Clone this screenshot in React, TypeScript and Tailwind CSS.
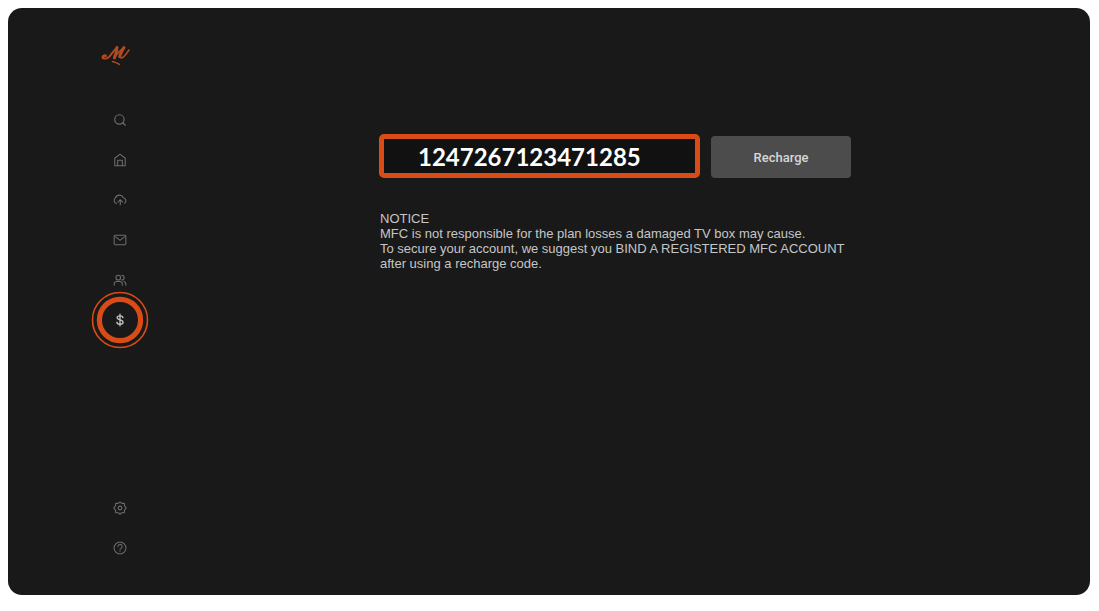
import React, { useState } from 'react';
import { Search } from 'lucide-react';

type NavItem = {
  label: string;
  icon: React.ReactNode;
  active?: boolean;
};

const LineIcon: React.FC<{ children: React.ReactNode }> = ({ children }) => (
  <svg
    width="14"
    height="14"
    viewBox="0 0 24 24"
    fill="none"
    stroke="currentColor"
    strokeWidth="1.8"
    strokeLinecap="round"
    strokeLinejoin="round"
  >
    {children}
  </svg>
);

const Logo: React.FC = () => (
  <svg width="32" height="22" viewBox="0 0 32 22" fill="none" stroke="#b24a20" strokeLinecap="round" strokeLinejoin="round">
    <path strokeWidth="2.6" d="M5.6 10.8C4 10.2 2.600 11.400 2.900 12.600" />
    <path strokeWidth="1.8" d="M2.900 12.600c.6 1.500 3.400 1.200 5.400-.2C11.200 10.400 13 6 17 2.300" />
    <path strokeWidth="3" d="M17 2.500C16.800 6 15.800 9.500 14.400 12.800" />
    <path strokeWidth="1.6" d="M14.400 12.800C17 8.800 20 5 24.200 2.300" />
    <path strokeWidth="3" d="M24 2.600C22.300 5.500 20 9 19.800 11.600" />
    <path strokeWidth="1.5" d="M19.800 11.600c.2 2 2.400 1.500 4.200-.2C26 9.300 27.300 7.500 29 5" />
    <path strokeWidth="1.5" d="M12.500 16.500c2.500.4 4.500 1.600 7 3" />
  </svg>
);

const mainItems: NavItem[] = [
  { label: 'Search', icon: <Search size={14} strokeWidth={2} /> },
  {
    label: 'Home',
    icon: (
      <LineIcon>
        <path d="M3 9 12 2l9 7v13H3z" />
        <path d="M8 22V12.500h8V22" />
      </LineIcon>
    ),
  },
  {
    label: 'Upload',
    icon: (
      <LineIcon>
        <path d="M6 18a5.500 5.500 0 0 1-2-9.500A7.500 7.500 0 0 1 17.800 8 5.300 5.300 0 0 1 20 17.500" />
        <path d="M12.500 20v-8M8.500 15.500l4-4 4 4" />
      </LineIcon>
    ),
  },
  {
    label: 'Messages',
    icon: (
      <LineIcon>
        <rect x="2" y="4" width="20" height="16" rx="1.5" />
        <path d="m4.500 6.500 7.500 6 7.500-6" />
      </LineIcon>
    ),
  },
  {
    label: 'Friends',
    icon: (
      <LineIcon>
        <circle cx="9" cy="8" r="4" />
        <path d="M2 21v-2a4.500 4.500 0 0 1 4.500-4.500h5A4.500 4.500 0 0 1 16 19v2M15 4a4 4 0 0 1 0 8M18.500 14.500A4.500 4.500 0 0 1 22 19v2" />
      </LineIcon>
    ),
  },
  {
    label: 'Recharge plan',
    icon: (
      <LineIcon>
        <path strokeWidth="2.2" d="M12 2v20M17 8c0-2-2-3.200-5-3.200S7 6.300 7 8.300c0 4.700 10.300 2.500 10.300 7.400 0 2.200-2.300 3.500-5.300 3.500s-5.300-1.300-5.300-3.500" />
      </LineIcon>
    ),
    active: true,
  },
];

const footerItems: NavItem[] = [
  {
    label: 'Settings',
    icon: (
      <LineIcon>
        <path d="m12 1.500 3 2.600 4.300-.4.400 4.200 3 4.100-3 3.600-.4 4.700-4.300-.2-3 2.600-3-2.600-4.300.2-.4-4.700-3-3.600 3-4.100.4-4.200 4.300.4z" />
        <circle cx="12" cy="12" r="3.2" />
      </LineIcon>
    ),
  },
  {
    label: 'Help',
    icon: (
      <LineIcon>
        <circle cx="12" cy="12" r="10.2" />
        <path d="M8.500 9.500a3.600 3.600 0 1 1 5.300 3.100c-1.300.7-1.800 1.300-1.800 2.600M12 18.200v.1" />
      </LineIcon>
    ),
  },
];

const NavButton: React.FC<{ item: NavItem }> = ({ item }) => (
  <button
    type="button"
    aria-label={item.label}
    aria-current={item.active ? 'page' : undefined}
    className={
      item.active
        ? 'relative flex size-10 items-center justify-center text-[#c4c4c4]'
        : 'flex size-10 items-center justify-center text-[#6c6c6c] hover:text-white'
    }
  >
    {item.active && (
      <svg className="absolute -inset-2.5" width="60" height="60" viewBox="0 0 60 60" fill="none" stroke="#d94c18">
        <circle cx="30" cy="30" r="27.500" strokeWidth="1.600" />
        <circle cx="30" cy="30" r="20.600" strokeWidth="5.200" />
      </svg>
    )}
    {item.icon}
  </button>
);

const Sidebar: React.FC = () => (
  <aside className="flex w-56 shrink-0 flex-col items-center pt-[37px] pb-[27px]">
    <div className="pr-2">
      <Logo />
    </div>
    <nav className="mt-[33px] flex flex-col">
      {mainItems.map((item) => (
        <NavButton key={item.label} item={item} />
      ))}
    </nav>
    <nav className="mt-auto flex flex-col">
      {footerItems.map((item) => (
        <NavButton key={item.label} item={item} />
      ))}
    </nav>
  </aside>
);

const RechargeForm: React.FC = () => {
  const [code, setCode] = useState('1247267123471285');

  return (
    <form className="flex items-end gap-[11px]" onSubmit={(e) => e.preventDefault()}>
      <input
        type="text"
        aria-label="Recharge code"
        value={code}
        onChange={(e) => setCode(e.target.value)}
        className="h-11 w-[321px] rounded-[5px] border-5 border-[#d94c18] bg-[#111111] pl-[34px] font-['Lato',sans-serif] text-2xl font-bold text-white outline-none"
      />
      <button
        type="submit"
        className="h-[42px] w-[140px] rounded-sm bg-[#4c4c4c] pt-0.5 font-['Roboto',sans-serif] text-[13px] font-medium text-[#d6d6d6]"
      >
        Recharge
      </button>
    </form>
  );
};

const App: React.FC = () => (
  <div className="flex min-h-screen bg-white pt-2 pr-[9px] pb-4 pl-2">
    <div className="flex flex-1 rounded-[14px] bg-[#191919]">
      <Sidebar />
      <main className="flex-1 pt-[126px] pl-[147px]">
        <RechargeForm />
        <div className="mt-[33px] pl-px font-['Liberation_Sans',Arial,sans-serif] text-[13px] leading-[15px] text-[#c6c6c6]">
          <h1>NOTICE</h1>
          <p>
            MFC is not responsible for the plan losses a damaged TV box may cause.
            <br />
            To secure your account, we suggest you BIND A REGISTERED MFC ACCOUNT
            <br />
            after using a recharge code.
          </p>
        </div>
      </main>
    </div>
  </div>
);

export default App;
